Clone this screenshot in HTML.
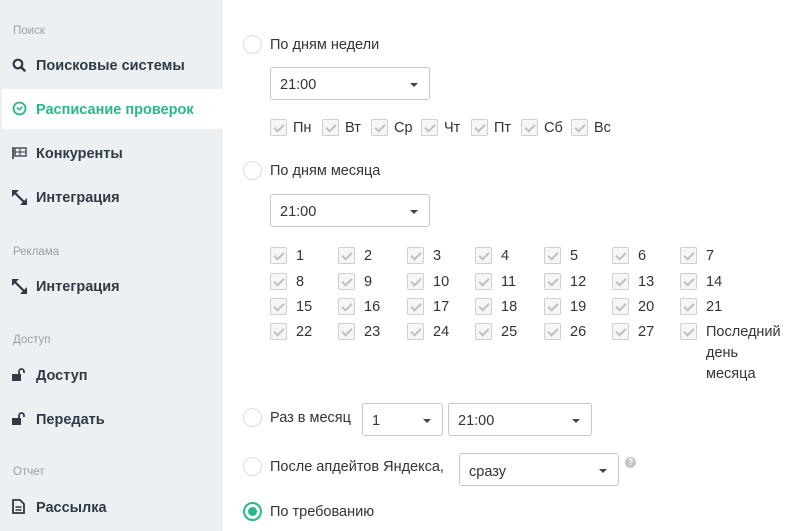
<!DOCTYPE html>
<html><head><meta charset="utf-8"><style>
*{box-sizing:border-box;margin:0;padding:0}
body{width:794px;height:531px;overflow:hidden;background:#fff;font-family:"Liberation Sans","DejaVu Sans",sans-serif;color:#333;position:relative}
.sb{position:absolute;left:0;top:0;width:222px;height:531px;background:#edf0f2;border-right:1px solid #e3e6e8}
.a{position:absolute}
.cap{font-size:11.5px;color:#9aa0a5;left:13px}
.it{font-size:14.5px;font-weight:bold;color:#2e3a45;left:36px}
.ic{position:absolute;left:12px}
.act{position:absolute;left:2px;top:89px;width:221px;height:40px;background:#fff;border-radius:3px 0 0 3px}
.t{font-size:14.5px;color:#333}
.rad{position:absolute;width:19px;height:19px;border:1px solid #ddd;border-radius:50%;background:#fff}
.sel{position:absolute;height:33px;border:1px solid #c8c8c8;border-radius:3px;background:#fff;font-size:14.5px;padding:9px 0 0 9px;color:#333}
.sel:after{content:"";position:absolute;right:11px;top:15px;border-left:4px solid transparent;border-right:4px solid transparent;border-top:4px solid #444}
.cb{position:absolute;width:17px;height:17px;border:1px solid #cfcfcf;border-radius:2px;background:#f6f6f6}
.cb:after{content:"";position:absolute;left:5px;top:2px;width:4px;height:8px;border:solid #c0c0c0;border-width:0 2px 2px 0;transform:rotate(45deg)}
</style></head><body>
<div class="sb">
<div class="act"></div>
<div class="a cap" style="top:25px">Поиск</div>
<svg class="ic" style="top:58px" width="14" height="14" viewBox="0 0 14 14"><circle cx="6" cy="6" r="4.3" fill="none" stroke="#2e3a45" stroke-width="2.2"/><path d="M9 9l3.5 3.5" stroke="#2e3a45" stroke-width="2.6" stroke-linecap="round"/></svg>
<div class="a it" style="top:58px">Поисковые системы</div>
<svg class="ic" style="top:101px" width="15" height="15" viewBox="0 0 15 15"><circle cx="7.5" cy="7.5" r="6" fill="none" stroke="#25b88a" stroke-width="1.8"/><path d="M4.8 6.5l2.7 2.2 2.8-3" fill="none" stroke="#25b88a" stroke-width="1.6"/></svg>
<div class="a it" style="top:102px;color:#25b88a">Расписание проверок</div>
<svg class="ic" style="top:147px" width="15" height="12" viewBox="0 0 15 12"><path d="M1 0v12" stroke="#2e3a45" stroke-width="1.6"/><path d="M3 1h11v8H3z" fill="none" stroke="#2e3a45" stroke-width="1.3"/><path d="M3 5h11M8 1v8" stroke="#2e3a45" stroke-width="1"/></svg>
<div class="a it" style="top:146px">Конкуренты</div>
<svg class="ic" style="top:190px" width="15" height="15" viewBox="0 0 15 15"><path d="M0 0h7l-7 7z" fill="#2e3a45"/><path d="M15 15H8l7-7z" fill="#2e3a45"/><path d="M3 3l9 9" stroke="#2e3a45" stroke-width="2.2"/></svg>
<div class="a it" style="top:190px">Интеграция</div>
<div class="a cap" style="top:246px">Реклама</div>
<svg class="ic" style="top:279px" width="15" height="15" viewBox="0 0 15 15"><path d="M0 0h7l-7 7z" fill="#2e3a45"/><path d="M15 15H8l7-7z" fill="#2e3a45"/><path d="M3 3l9 9" stroke="#2e3a45" stroke-width="2.2"/></svg>
<div class="a it" style="top:279px">Интеграция</div>
<div class="a cap" style="top:334px">Доступ</div>
<svg class="ic" style="top:368px" width="15" height="13" viewBox="0 0 15 13"><rect x="0" y="6" width="9" height="7" fill="#2e3a45"/><path d="M7 6V3.5a2.5 2.5 0 015 0V5" fill="none" stroke="#2e3a45" stroke-width="1.8"/></svg>
<div class="a it" style="top:368px">Доступ</div>
<svg class="ic" style="top:412px" width="15" height="13" viewBox="0 0 15 13"><rect x="0" y="6" width="9" height="7" fill="#2e3a45"/><path d="M7 6V3.5a2.5 2.5 0 015 0V5" fill="none" stroke="#2e3a45" stroke-width="1.8"/></svg>
<div class="a it" style="top:412px">Передать</div>
<div class="a cap" style="top:466px">Отчет</div>
<svg class="ic" style="top:499px" width="13" height="15" viewBox="0 0 13 15"><path d="M1 1h7l4 4v9H1z" fill="none" stroke="#2e3a45" stroke-width="1.8"/><path d="M3.5 8h6M3.5 11h6" stroke="#2e3a45" stroke-width="1.5"/></svg>
<div class="a it" style="top:500px">Рассылка</div>
</div>

<div class="rad" style="left:243px;top:35px"></div>
<div class="a t" style="left:270px;top:37px">По дням недели</div>
<div class="sel" style="left:270px;top:67px;width:160px">21:00</div>

<div class="cb" style="left:270px;top:119px"></div><div class="a t" style="left:293px;top:120px">Пн</div>
<div class="cb" style="left:322px;top:119px"></div><div class="a t" style="left:345px;top:120px">Вт</div>
<div class="cb" style="left:371px;top:119px"></div><div class="a t" style="left:394px;top:120px">Ср</div>
<div class="cb" style="left:421px;top:119px"></div><div class="a t" style="left:444px;top:120px">Чт</div>
<div class="cb" style="left:471px;top:119px"></div><div class="a t" style="left:494px;top:120px">Пт</div>
<div class="cb" style="left:521px;top:119px"></div><div class="a t" style="left:544px;top:120px">Сб</div>
<div class="cb" style="left:571px;top:119px"></div><div class="a t" style="left:594px;top:120px">Вс</div>

<div class="rad" style="left:243px;top:161px"></div>
<div class="a t" style="left:270px;top:163px">По дням месяца</div>
<div class="sel" style="left:270px;top:194px;width:160px">21:00</div>

<div id="g"></div>
<script>
var xs=[270,338,407,475,544,612,680],ys=[247,273,298,323],h='';
for(var r=0;r<4;r++)for(var c=0;c<7;c++){var n=r*7+c+1;var lbl=n==28?'Последний<br>день<br>месяца':n;
h+='<div class="cb" style="left:'+xs[c]+'px;top:'+ys[r]+'px"></div><div class="a t" style="left:'+(xs[c]+26)+'px;top:'+(ys[r]-1)+'px;line-height:21px">'+lbl+'</div>';}
document.getElementById('g').innerHTML=h;
</script>

<div class="rad" style="left:243px;top:408px"></div>
<div class="a t" style="left:270px;top:410px">Раз в месяц</div>
<div class="sel" style="left:362px;top:403px;width:81px">1</div>
<div class="sel" style="left:448px;top:403px;width:144px">21:00</div>

<div class="rad" style="left:243px;top:457px"></div>
<div class="a t" style="left:270px;top:459px">После апдейтов Яндекса,</div>
<div class="sel" style="left:459px;top:453px;width:160px;padding-top:10px">сразу</div>
<div class="a" style="left:625px;top:457px;width:11px;height:11px;border-radius:50%;background:#c4c4c4;color:#fff;font-size:9px;font-weight:bold;text-align:center;line-height:11px">?</div>

<div class="rad" style="left:243px;top:502px;border:2px solid #25b88a"><div style="position:absolute;left:3px;top:3px;width:9px;height:9px;border-radius:50%;background:#25b88a"></div></div>
<div class="a t" style="left:270px;top:504px">По требованию</div>
</body></html>
